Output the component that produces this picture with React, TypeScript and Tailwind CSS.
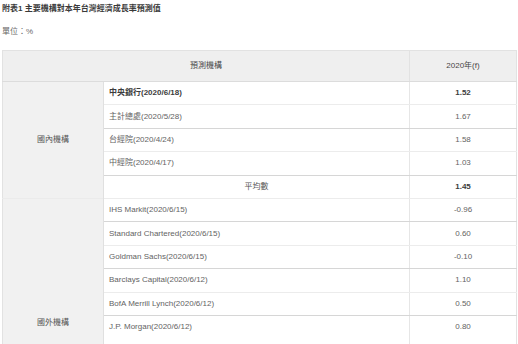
const domestic = [
  { name: "中央銀行(2020/6/18)", value: "1.52", bold: true, line: "light" },
  { name: "主計總處(2020/5/28)", value: "1.67", line: "dark" },
  { name: "台經院(2020/4/24)", value: "1.58", line: "light" },
  { name: "中經院(2020/4/17)", value: "1.03", line: "dark" },
];

const foreign = [
  { name: "IHS Markit(2020/6/15)", value: "-0.96", line: "dark" },
  { name: "Standard Chartered(2020/6/15)", value: "0.60", line: "light" },
  { name: "Goldman Sachs(2020/6/15)", value: "-0.10", line: "dark" },
  { name: "Barclays Capital(2020/6/12)", value: "1.10", line: "light" },
  { name: "BofA Merrill Lynch(2020/6/12)", value: "0.50", line: "dark" },
  { name: "J.P. Morgan(2020/6/12)", value: "0.80", line: "none" },
];

const lineClass = (line?: string) =>
  line === "dark"
    ? "border-b border-b-[#d6d6d6]"
    : line === "none"
      ? ""
      : "border-b border-b-[#ececec]";

export default function App() {
  return (
    <div
      className="h-[344px] overflow-hidden bg-white px-[2px] pt-[5px] text-[8px] leading-none text-[#636363]"
      style={{ fontFamily: '"Liberation Sans", "Noto Sans CJK TC", sans-serif' }}
    >
      <div className="h-[11px] font-bold text-[#3a3a3a]">附表1 主要機構對本年台灣經濟成長率預測值</div>
      <div className="mt-[12px] h-[11px] text-[#6a6a6a]">單位：%</div>

      <table className="mt-[11px] w-[514px] table-fixed border-collapse border border-b-0 border-[#e2e2e2]">
        <colgroup>
          <col className="w-[101px]" />
          <col className="w-[306px]" />
          <col className="w-[107px]" />
        </colgroup>
        <thead>
          <tr className="h-[31px] bg-[#efefef] text-[#474747]">
            <th colSpan={2} className="border-b border-b-[#dcdcdc] font-normal">預測機構</th>
            <th className="border-b border-l border-b-[#dcdcdc] border-l-[#e2e2e2] font-normal">2020年(f)</th>
          </tr>
        </thead>
        <tbody>
          {domestic.map((r, i) => (
            <tr key={r.name} className="h-[23.4px]">
              {i === 0 && (
                <td rowSpan={5} className="border-r border-r-[#e0e0e0] bg-[#f1f1f1] text-center text-[#555]">
                  國內機構
                </td>
              )}
              <td className={`${lineClass(r.line)} pl-[5px] ${r.bold ? "font-bold text-[#3c3c3c]" : ""}`}>{r.name}</td>
              <td className={`${lineClass(r.line)} border-l border-l-[#e6e6e6] text-center ${r.bold ? "font-bold text-[#3c3c3c]" : ""}`}>
                {r.value}
              </td>
            </tr>
          ))}
          <tr className="h-[23.4px]">
            <td className="border-b border-b-[#ececec] text-center text-[#555]">平均數</td>
            <td className="border-b border-l border-b-[#ececec] border-l-[#e6e6e6] text-center font-bold text-[#3c3c3c]">1.45</td>
          </tr>
          {foreign.map((r, i) => (
            <tr key={r.name} className="h-[23.4px]">
              {i === 0 && (
                <td
                  rowSpan={foreign.length + 1}
                  className="border-r border-t border-r-[#e0e0e0] border-t-[#ebebeb] bg-[#f1f1f1] pb-[20px] text-center align-bottom text-[#555]"
                >
                  國外機構
                </td>
              )}
              <td className={`${lineClass(r.line)} pl-[5px]`}>{r.name}</td>
              <td className={`${lineClass(r.line)} border-l border-l-[#e6e6e6] text-center`}>{r.value}</td>
            </tr>
          ))}
          <tr className="h-[8px]">
            <td />
            <td className="border-l border-l-[#e6e6e6]" />
          </tr>
        </tbody>
      </table>
    </div>
  );
}
